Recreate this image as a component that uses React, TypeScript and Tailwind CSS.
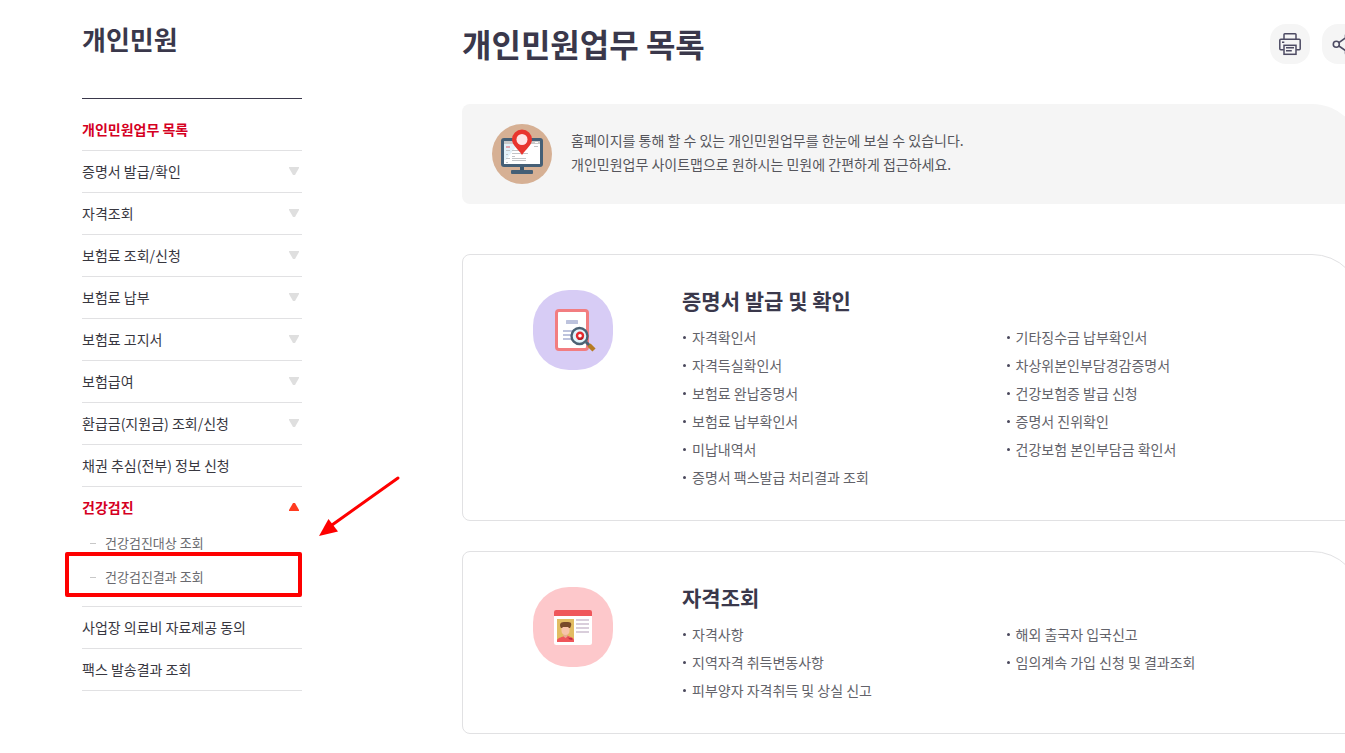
import React from "react";

type MenuItem = { label: string; expandable?: boolean; active?: boolean; children?: string[] };

const menu: MenuItem[] = [
  { label: "개인민원업무 목록", active: true },
  { label: "증명서 발급/확인", expandable: true },
  { label: "자격조회", expandable: true },
  { label: "보험료 조회/신청", expandable: true },
  { label: "보험료 납부", expandable: true },
  { label: "보험료 고지서", expandable: true },
  { label: "보험급여", expandable: true },
  { label: "환급금(지원금) 조회/신청", expandable: true },
  { label: "채권 추심(전부) 정보 신청" },
  {
    label: "건강검진",
    active: true,
    expandable: true,
    children: ["건강검진대상 조회", "건강검진결과 조회"],
  },
  { label: "사업장 의료비 자료제공 동의" },
  { label: "팩스 발송결과 조회" },
];

const HIGHLIGHTED = "건강검진결과 조회";

function MonitorIcon() {
  return (
    <svg width="60" height="60" viewBox="0 0 60 60" aria-hidden="true" className="shrink-0">
      <circle cx="30" cy="30" r="30" fill="#d6b094" />
      <rect x="9" y="14" width="42" height="29" rx="3" fill="#455f76" />
      <rect x="12" y="17" width="36" height="23" fill="#fff" />
      <rect x="12" y="17" width="36" height="3" fill="#c9c9c9" />
      <path d="M12 20h14L14 36h-2z" fill="#e3f1f8" />
      <rect x="14" y="22" width="4" height="2" fill="#e3a5ae" />
      <path
        d="M14 26.500h4M14 30.500h2M14 34.500h4M14 38.500h2M20 26.500h9M20 29.500h16M20 32.500h3M20 34.500h14M20 36.500h14M42 22.500h4"
        stroke="#c2c4c7"
        fill="none"
      />
      <rect x="43" y="18" width="3" height="1" fill="#fff" />
      <rect x="28" y="43" width="4" height="4" fill="#3b566d" />
      <rect x="19" y="46" width="22" height="4" rx="1" fill="#455f76" />
      <path d="M30 31C26 25 20 21 20 15.500a10 10 0 0 1 20 0C40 21 34 25 30 31z" fill="#e8352e" />
      <circle cx="30" cy="15.500" r="5.500" fill="#fde4e5" />
    </svg>
  );
}

function CertificateIcon() {
  return (
    <svg width="80" height="80" viewBox="0 0 80 80" aria-hidden="true">
      <rect width="80" height="80" rx="36" fill="#d7ccf5" />
      <rect x="23.500" y="20.500" width="31" height="39" rx="2.500" fill="#fff" stroke="#f27d80" strokeWidth="3" />
      <rect x="33" y="30" width="12" height="4" rx="0.500" fill="#bdc3dd" />
      <path d="M30 41h10M30 45h8M30 49h9" stroke="#bdc3dd" strokeWidth="2" />
      <path d="M53 52l4 4" stroke="#4b6274" strokeWidth="3" />
      <path d="M56 55l5 5" stroke="#b67b22" strokeWidth="4.500" />
      <circle cx="46.500" cy="46" r="8" fill="#e2f5fc" stroke="#4b6274" strokeWidth="2.400" />
      <circle cx="47" cy="45.800" r="3" fill="#fff" stroke="#e4292d" strokeWidth="2.400" />
      <path d="M45 48.600a3.500 3.500 0 0 0 5-1" fill="none" stroke="#ad2028" strokeWidth="1.500" />
    </svg>
  );
}

function IdCardIcon() {
  return (
    <svg width="80" height="80" viewBox="0 0 80 80" aria-hidden="true">
      <rect width="80" height="80" rx="36" fill="#fdc8cb" />
      <rect x="21" y="23" width="38" height="35" rx="2.500" fill="#fff" />
      <path d="M21 29v-4a2 2 0 0 1 2-2h34a2 2 0 0 1 2 2v4z" fill="#ef575b" />
      <rect x="24" y="32" width="17" height="23" fill="#e2bc62" />
      <path d="M24 55v-1.500c0-2 3-3 5.500-3.800L33 48l4 1.700c2 .8 4 1.500 4 3.800V55z" fill="#ef555a" />
      <path d="M30.500 45h4v4.500l-2 1.500-2-1.500z" fill="#e8aa91" />
      <path d="M28.500 39h8v5c0 2.500-2 4-4 4s-4-1.500-4-4z" fill="#f7c3a9" />
      <path d="M28 41c-2-3-1-6 3-6h4c4 0 4 3 2 6h-1l-1-1h-5l-1 1z" fill="#784929" />
      <path d="M34 49.500l2 1.500h3l.5 2-3-.5z" fill="#bd3041" />
      <path d="M43 33h13M43 37h13M43 41h13M43 45h13" stroke="#d9cedb" strokeWidth="2" />
    </svg>
  );
}

function PrintIcon() {
  return (
    <svg width="40" height="40" viewBox="0 0 40 40" fill="none" stroke="#4d4b63" strokeWidth="1.500" aria-hidden="true">
      <path d="M14 15.300V10.500a.8.8 0 0 1 .8-.8h10.400a.8.8 0 0 1 .8.8v4.800" />
      <path d="M13.800 25.800h-3a1 1 0 0 1-1-1v-8.500a1 1 0 0 1 1-1h18.400a1 1 0 0 1 1 1v8.500a1 1 0 0 1-1 1h-3" />
      <rect x="14" y="21.300" width="12" height="9" />
      <path d="M12 18.300h2.300M16 23.800h8M16 26.800h5.800" />
    </svg>
  );
}

function ShareIcon() {
  return (
    <svg width="40" height="40" viewBox="0 0 40 40" fill="none" stroke="#4d4b63" strokeWidth="1.600" aria-hidden="true">
      <circle cx="14.300" cy="20.300" r="3" />
      <circle cx="26.500" cy="12" r="3" />
      <circle cx="26.500" cy="28.600" r="3" />
      <path d="M16.900 18.600l7-4.900M16.900 22l7 4.900" />
    </svg>
  );
}

function Triangle({ open }: { open?: boolean }) {
  return open ? (
    <svg width="10" height="8" viewBox="0 0 10 8" aria-hidden="true">
      <path d="M4 0h2L10 7v1H0V7z" fill="#ff3b20" />
    </svg>
  ) : (
    <svg width="10" height="8" viewBox="0 0 10 8" aria-hidden="true">
      <path d="M0 0h10v1L6 8H4L0 1z" fill="#dfdfdf" />
    </svg>
  );
}

function Sidebar() {
  return (
    <aside className="w-[220px] shrink-0 pt-5">
      <h2 className="text-[26px] leading-[38px] font-bold text-[#3a384b]">개인민원</h2>
      <nav aria-label="개인민원" className="mt-10 border-t border-[#3a384b] pt-[10px]">
        <ul>
          {menu.map((item) => (
            <li key={item.label} className="border-b border-[#e1e1e3]">
              <a
                href="#"
                className={
                  item.active
                    ? "flex h-[41px] items-center justify-between pr-[3px] pb-0.5 font-bold text-[#d5001f]"
                    : "flex h-[41px] items-center justify-between pr-[3px] pb-0.5 text-[#38373f]"
                }
              >
                {item.label}
                {item.expandable && <Triangle open={item.active} />}
              </a>
              {item.children && (
                <ul className="pb-2.5 text-[13px] text-[#69696e]">
                  {item.children.map((child) => (
                    <li key={child} className="relative">
                      <a href="#" className="flex h-[34px] items-center gap-[9px] pb-1 pl-2">
                        <span className="h-px w-[6px] bg-[#c8c8c8]" />
                        {child}
                      </a>
                      {child === HIGHLIGHTED && (
                        <>
                          <span className="pointer-events-none absolute -top-2.5 -left-[17px] h-[45px] w-[237px] rounded-xs border-4 border-[#fe0000]" />
                          <svg
                            className="pointer-events-none absolute -top-[88px] left-[236px]"
                            width="84"
                            height="66"
                            viewBox="0 0 84 66"
                            aria-hidden="true"
                          >
                            <path d="M80 4L14 51" stroke="#fe0000" strokeWidth="3" strokeLinecap="round" />
                            <path d="M1 62L10.500 45l9.500 12.500z" fill="#fe0000" />
                          </svg>
                        </>
                      )}
                    </li>
                  ))}
                </ul>
              )}
            </li>
          ))}
        </ul>
      </nav>
    </aside>
  );
}

type CardProps = { title: string; icon: React.ReactNode; columns: string[][] };

function ServiceCard({ title, icon, columns }: CardProps) {
  return (
    <section className="flex gap-[69px] rounded-lg rounded-tr-[50px] border border-[#e1e1e3] pt-[35px] pr-8 pb-7 pl-[70px]">
      <div className="shrink-0">{icon}</div>
      <div className="flex-1">
        <h2 className="text-[21px] leading-5 font-bold text-[#3a384b]">{title}</h2>
        <div className="mt-3.5 grid grid-cols-2">
          {columns.map((column) => (
            <ul key={column[0]}>
              {column.map((label) => (
                <li key={label} className="flex h-7 items-center gap-1.5 pb-0.5 pl-px">
                  <span className="size-[3px] rounded-full bg-[#4a485c]" />
                  <a href="#" className="text-[#63636a]">
                    {label}
                  </a>
                </li>
              ))}
            </ul>
          ))}
        </div>
      </div>
    </section>
  );
}

export default function App() {
  return (
    <div className="min-h-screen overflow-x-hidden bg-white font-['Noto_Sans_CJK_KR','Noto_Sans',sans-serif] text-sm">
      <div className="flex gap-40 pb-5 pl-[82px]">
        <Sidebar />
        <main className="min-w-[900px] flex-1 pt-6">
          <header className="flex justify-between">
            <h1 className="text-[32px] leading-[38px] font-bold text-[#3a384b]">개인민원업무 목록</h1>
            <div className="flex gap-3">
              <button type="button" aria-label="인쇄" className="size-10 rounded-2xl bg-[#f5f5f5]">
                <PrintIcon />
              </button>
              <button type="button" aria-label="공유" className="size-10 rounded-2xl bg-[#f5f5f5]">
                <ShareIcon />
              </button>
            </div>
          </header>

          <div className="mt-10 flex items-center gap-[19px] rounded-lg rounded-tr-[50px] bg-[#f5f5f5] px-[30px] py-5">
            <MonitorIcon />
            <p className="pb-1 leading-6 text-[#55555c]">
              홈페이지를 통해 할 수 있는 개인민원업무를 한눈에 보실 수 있습니다.
              <br />
              개인민원업무 사이트맵으로 원하시는 민원에 간편하게 접근하세요.
            </p>
          </div>

          <div className="mt-[50px] flex flex-col gap-[30px]">
            <ServiceCard
              title="증명서 발급 및 확인"
              icon={<CertificateIcon />}
              columns={[
                [
                  "자격확인서",
                  "자격득실확인서",
                  "보험료 완납증명서",
                  "보험료 납부확인서",
                  "미납내역서",
                  "증명서 팩스발급 처리결과 조회",
                ],
                [
                  "기타징수금 납부확인서",
                  "차상위본인부담경감증명서",
                  "건강보험증 발급 신청",
                  "증명서 진위확인",
                  "건강보험 본인부담금 확인서",
                ],
              ]}
            />
            <ServiceCard
              title="자격조회"
              icon={<IdCardIcon />}
              columns={[
                ["자격사항", "지역자격 취득변동사항", "피부양자 자격취득 및 상실 신고"],
                ["해외 출국자 입국신고", "임의계속 가입 신청 및 결과조회"],
              ]}
            />
          </div>
        </main>
      </div>
    </div>
  );
}
